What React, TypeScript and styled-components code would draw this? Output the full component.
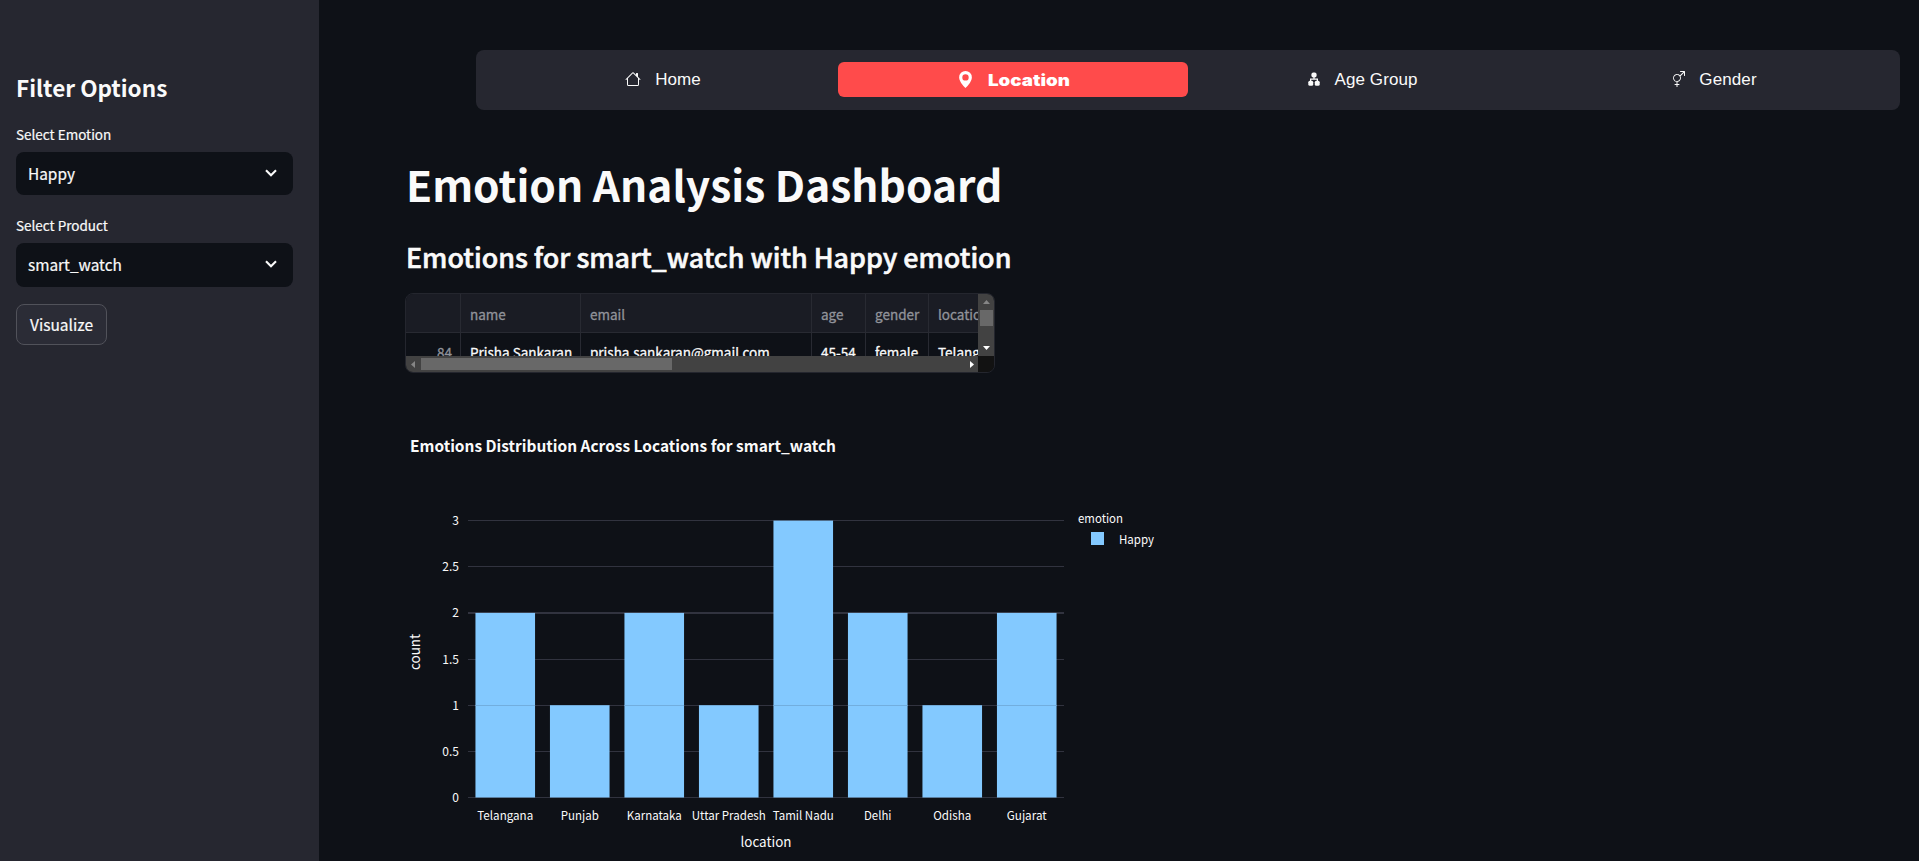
import React from "react";
import styled, { createGlobalStyle } from "styled-components";
import { BsHouse, BsGeoAltFill, BsGenderAmbiguous } from "react-icons/bs";

const sans = `"Noto Sans CJK SC", "Noto Sans CJK JP", sans-serif`;

const GlobalStyle = createGlobalStyle`
  * { box-sizing: border-box; }
  body { margin: 0; background: #0e1117; color: #fafafa; font-family: ${sans}; overflow: hidden; }
  h1, h2, h3, p { margin: 0; white-space: nowrap; }
`;

const Page = styled.div`
  display: flex;
  height: 861px;
  overflow: hidden;
`;

const Sidebar = styled.aside`
  width: 319px;
  flex: none;
  background: #262730;
  padding: 70px 26px 0 16px;
  -webkit-text-stroke: 0.2px;
`;

const SidebarTitle = styled.h2`
  font-size: 22.5px;
  line-height: 34px;
  font-weight: 600;
  -webkit-text-stroke: 0;
`;

const Label = styled.p<{ $top: number }>`
  margin-top: ${(p) => p.$top}px;
  font-size: 13.5px;
  line-height: 20px;
`;

const Select = styled.div<{ $height: number }>`
  display: flex;
  align-items: center;
  justify-content: space-between;
  height: ${(p) => p.$height}px;
  margin-top: 8px;
  padding: 0 16px 2px 12px;
  border-radius: 8px;
  background: #0e1117;
  font-size: 15.4px;
  line-height: 24px;
`;

const VisualizeButton = styled.button`
  display: block;
  width: 91px;
  height: 41px;
  margin-top: 17px;
  padding: 0 0 2px;
  border: 1px solid #51525a;
  border-radius: 8px;
  background: #2b2c36;
  color: #fafafa;
  font: 15.5px/22px ${sans};
  -webkit-text-stroke: 0.2px;
`;

const Main = styled.main`
  flex: 1;
  min-width: 0;
  padding: 50px 19px 0 87px;
`;

const Nav = styled.nav`
  display: flex;
  height: 60px;
  margin-left: 70px;
  padding: 12px;
  border-radius: 8px;
  background: #262730;
`;

const NavItem = styled.a<{ $active?: boolean }>`
  flex: 1;
  display: flex;
  align-items: center;
  justify-content: center;
  gap: 14px;
  height: 35px;
  border-radius: 6px;
  background: ${(p) => (p.$active ? "#ff4b4b" : "transparent")};
  color: ${(p) => (p.$active ? "#fff" : "#fafafa")};
  font-family: "Liberation Sans", Arial, sans-serif;
  font-size: 17px;
  letter-spacing: 0.1px;

  svg {
    margin-bottom: 1px;
  }
`;

const ActiveText = styled.span`
  width: 82px;
  font: 900 16px Inter, "Liberation Sans", sans-serif;
  letter-spacing: 0;
  transform: scaleX(1.17);
  transform-origin: left center;
  padding-top: 1px;
`;

const Title = styled.h1`
  margin-top: 41px;
  font-size: 42.5px;
  line-height: 66px;
  font-weight: 700;
`;

const Subtitle = styled.h3`
  margin-top: 19px;
  font-size: 26.85px;
  line-height: 42px;
  font-weight: 500;
  -webkit-text-stroke: 0.6px;
`;

const Frame = styled.div`
  width: 590px;
  height: 80px;
  margin: 15px 0 0 -1px;
  border: 1px solid #24262e;
  border-radius: 8px;
  overflow: hidden;
  display: grid;
  grid-template-columns: 572px 16px;
  grid-template-rows: 62px 16px;
`;

const Grid = styled.div`
  display: grid;
  grid-template-columns: 55px 120px 231px 54px 63px 90px;
  grid-template-rows: 39px 38px;
  overflow: hidden;
`;

const Cell = styled.div<{ $head?: boolean; $index?: boolean }>`
  padding: 0 8px 0 9px;
  border-right: 1px solid #282a32;
  border-bottom: 1px solid #282a32;
  background: ${(p) => (p.$head ? "#1a1c24" : "#0e1117")};
  color: ${(p) => (p.$head || p.$index ? "#91939a" : "#fafafa")};
  font-size: 13.5px;
  line-height: ${(p) => (p.$head ? 40 : 38)}px;
  text-align: ${(p) => (p.$index ? "right" : "left")};
  white-space: nowrap;
  -webkit-text-stroke: 0.3px;
`;

const VTrack = styled.div`
  display: flex;
  flex-direction: column;
  justify-content: space-between;
  align-items: center;
  padding: 6px 0;
  background: #424242;
`;

const VThumb = styled.div`
  width: 13px;
  height: 16px;
  margin: 6px 0 auto;
  background: #686868;
`;

const HTrack = styled.div`
  display: flex;
  align-items: center;
  justify-content: space-between;
  padding: 0 4px 0 5px;
  background: #424242;
`;

const HThumb = styled.div`
  width: 251px;
  height: 12px;
  margin: 0 auto 0 6px;
  background: #686868;
`;

const Corner = styled.div`
  background: #121212;
`;

const Chart = styled.svg`
  display: block;
  margin-top: 47px;
  font-family: ${sans};
  fill: #fafafa;
`;

const Chevron = () => (
  <svg width="12" height="8" viewBox="0 0 12 8" fill="none" stroke="#fafafa" strokeWidth="2.1">
    <path d="M1 1.2 L6 6.2 L11 1.2" />
  </svg>
);

const GroupIcon = () => (
  <svg width="12" height="14" viewBox="0 0 12 14" fill="#fafafa">
    <rect x="3.4" y="0.4" width="5.2" height="5" rx="2" />
    <path d="M6 5 V7.2 M2.6 9.5 V7.2 H9.4 V9.5" fill="none" stroke="#fafafa" strokeWidth="1.2" />
    <rect x="0.3" y="8.8" width="4.9" height="4.9" rx="1.5" />
    <rect x="6.8" y="8.8" width="4.9" height="4.9" rx="1.5" />
  </svg>
);

const Arrow = ({ d, color, w, h }: { d: string; color: string; w: number; h: number }) => (
  <svg width={w} height={h} viewBox={`0 0 ${w} ${h}`}>
    <path d={d} fill={color} />
  </svg>
);

const bars: [string, number, number][] = [
  ["Telangana", 2, 56],
  ["Punjab", 1, 38],
  ["Karnataka", 2, 55],
  ["Uttar Pradesh", 1, 74],
  ["Tamil Nadu", 3, 61],
  ["Delhi", 2, 27.5],
  ["Odisha", 1, 38],
  ["Gujarat", 2, 40],
];

const ticks = [0, 0.5, 1, 1.5, 2, 2.5, 3];
const left = 62;
const slot = 74.5;
const base = 377.5;
const unit = 92.3;
const yOf = (v: number) => base - v * unit;

const DistributionChart = () => (
  <Chart width="800" height="441" viewBox="0 0 800 441">
    <text x="4" y="32" fontSize="15.5" fontWeight="700" textLength="426" lengthAdjust="spacingAndGlyphs">
      Emotions Distribution Across Locations for smart_watch
    </text>
    {ticks.map((t) => (
      <g key={t}>
        <rect x={left} y={Math.floor(yOf(t))} width="596" height={t === 2 ? 2 : 1} fill="#31333f" />
        <text x="53" y={Math.floor(yOf(t)) + 5} fontSize="12" textAnchor="end">
          {t}
        </text>
      </g>
    ))}
    {bars.map(([name, n, w], i) => {
      const x = left + slot * i + 7.45;
      return (
        <g key={name}>
          <rect x={x} y={yOf(n)} width="59.6" height={n * unit} fill="#83c9ff" />
          {n > 1 && <rect x={x} y={Math.floor(yOf(1))} width="59.6" height="1" fill="#72aede" />}
          <text x={left + slot * (i + 0.5)} y="400" fontSize="12" textAnchor="middle" textLength={w} lengthAdjust="spacingAndGlyphs">
            {name}
          </text>
        </g>
      );
    })}
    <text x="360" y="427" fontSize="14" textAnchor="middle" textLength="51" lengthAdjust="spacingAndGlyphs">
      location
    </text>
    <text transform="translate(14 232) rotate(-90)" fontSize="14" textAnchor="middle" textLength="36" lengthAdjust="spacingAndGlyphs">
      count
    </text>
    <text x="672" y="103" fontSize="12.3" textLength="45" lengthAdjust="spacingAndGlyphs">
      emotion
    </text>
    <rect x="685" y="112" width="13" height="13" fill="#83c9ff" />
    <text x="713" y="124" fontSize="12.3" textLength="35" lengthAdjust="spacingAndGlyphs">
      Happy
    </text>
  </Chart>
);

export default function App() {
  return (
    <>
      <GlobalStyle />
      <Page>
        <Sidebar>
          <SidebarTitle>Filter Options</SidebarTitle>
          <Label $top={20}>Select Emotion</Label>
          <Select $height={43}>
            Happy
            <Chevron />
          </Select>
          <Label $top={20}>Select Product</Label>
          <Select $height={44}>
            smart_watch
            <Chevron />
          </Select>
          <VisualizeButton>Visualize</VisualizeButton>
        </Sidebar>
        <Main>
          <Nav>
            <NavItem>
              <BsHouse size={16} />
              Home
            </NavItem>
            <NavItem $active>
              <BsGeoAltFill size={17} />
              <ActiveText>Location</ActiveText>
            </NavItem>
            <NavItem>
              <GroupIcon />
              Age Group
            </NavItem>
            <NavItem>
              <BsGenderAmbiguous size={16} />
              Gender
            </NavItem>
          </Nav>
          <Title>Emotion Analysis Dashboard</Title>
          <Subtitle>Emotions for smart_watch with Happy emotion</Subtitle>
          <Frame>
            <Grid>
              <Cell $head />
              <Cell $head>name</Cell>
              <Cell $head>email</Cell>
              <Cell $head>age</Cell>
              <Cell $head>gender</Cell>
              <Cell $head>location</Cell>
              <Cell $index>84</Cell>
              <Cell>Prisha Sankaran</Cell>
              <Cell>prisha.sankaran@gmail.com</Cell>
              <Cell>45-54</Cell>
              <Cell>female</Cell>
              <Cell>Telangana</Cell>
            </Grid>
            <VTrack>
              <Arrow w={7} h={4} d="M0 4 L3.5 0 L7 4Z" color="#868686" />
              <VThumb />
              <Arrow w={7} h={4} d="M0 0 L7 0 L3.5 4Z" color="#fff" />
            </VTrack>
            <HTrack>
              <Arrow w={4} h={7} d="M4 0 L0 3.5 L4 7Z" color="#868686" />
              <HThumb />
              <Arrow w={4} h={7} d="M0 0 L4 3.5 L0 7Z" color="#fff" />
            </HTrack>
            <Corner />
          </Frame>
          <DistributionChart />
        </Main>
      </Page>
    </>
  );
}
